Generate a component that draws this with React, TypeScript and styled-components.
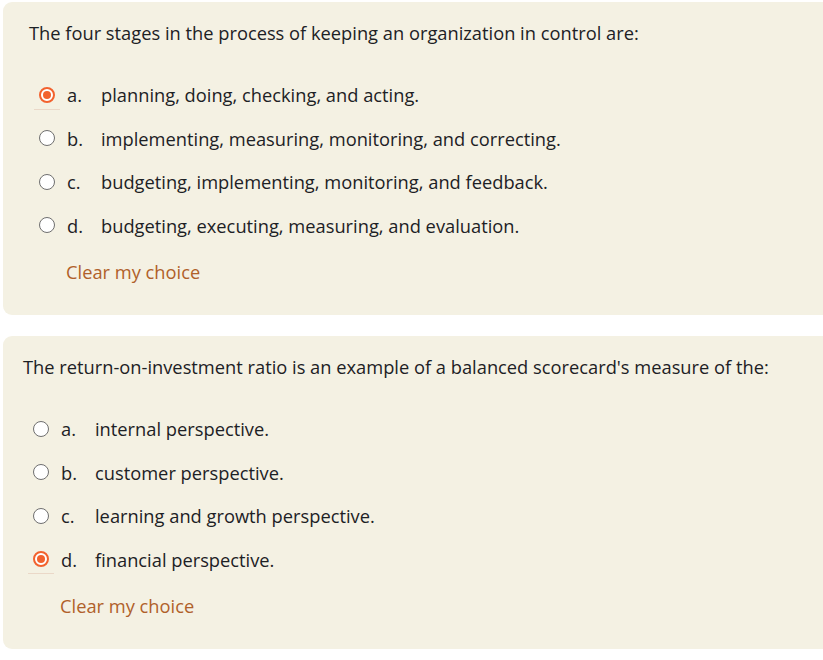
import React, { useState } from "react";
import styled, { createGlobalStyle } from "styled-components";

const GlobalStyle = createGlobalStyle`
  html, body {
    margin: 0;
    padding: 0;
    background: #ffffff;
    overflow-x: hidden;
  }
  body {
    font-family: "Open Sans", "Noto Sans", sans-serif;
    color: #1d2125;
  }
`;

const Page = styled.div`
  display: flex;
  flex-direction: column;
  gap: 21px;
  padding: 2px 0 0 3px;
  width: 850px;
`;

const Card = styled.section<{ $indent: number }>`
  background: #f4f1e3;
  border-radius: 9px;
  padding: 17px 0 29px ${(p) => p.$indent}px;
`;

const Question = styled.div`
  font-size: 18.3px;
  line-height: 28px;
`;

const Options = styled.div`
  display: flex;
  flex-direction: column;
  margin-top: 26px;
  padding-left: 10px;
`;

const Row = styled.label`
  display: flex;
  align-items: center;
  height: 43.5px;
  font-size: 18.3px;
  cursor: pointer;
`;

const RadioWrap = styled.span<{ $checked: boolean }>`
  position: relative;
  width: 16px;
  height: 16px;
  flex: none;
  &::after {
    content: "";
    display: ${(p) => (p.$checked ? "block" : "none")};
    position: absolute;
    left: -5px;
    top: 22px;
    width: 26px;
    height: 1px;
    background: #ead8c8;
  }
`;

const RadioCircle = styled.span<{ $checked: boolean }>`
  box-sizing: border-box;
  display: block;
  width: 16px;
  height: 16px;
  border-radius: 50%;
  background: #ffffff;
  border: ${(p) => (p.$checked ? "2px solid #f2622e" : "1.5px solid #6f6f6f")};
  position: relative;
  &::after {
    content: "";
    display: ${(p) => (p.$checked ? "block" : "none")};
    position: absolute;
    left: 2px;
    top: 2px;
    width: 8px;
    height: 8px;
    border-radius: 50%;
    background: #f2622e;
  }
`;

const Letter = styled.span`
  width: 34px;
  margin-left: 12px;
  flex: none;
`;

const AnswerText = styled.span``;

const ClearLink = styled.a`
  display: inline-block;
  margin-top: 11px;
  margin-left: 37px;
  font-size: 18.3px;
  line-height: 28px;
  color: #b0602a;
  text-decoration: none;
  cursor: pointer;
`;

type Q = {
  id: string;
  text: string;
  options: string[];
  selected: number;
  indent: number;
};

const questions: Q[] = [
  {
    id: "q1",
    text: "The four stages in the process of keeping an organization in control are:",
    options: [
      "planning, doing, checking, and acting.",
      "implementing, measuring, monitoring, and correcting.",
      "budgeting, implementing, monitoring, and feedback.",
      "budgeting, executing, measuring, and evaluation.",
    ],
    selected: 0,
    indent: 26,
  },
  {
    id: "q2",
    text: "The return-on-investment ratio is an example of a balanced scorecard's measure of the:",
    options: [
      "internal perspective.",
      "customer perspective.",
      "learning and growth perspective.",
      "financial perspective.",
    ],
    selected: 3,
    indent: 20,
  },
];

const letters = ["a.", "b.", "c.", "d."];

function QuestionCard({ q }: { q: Q }) {
  const [sel, setSel] = useState<number>(q.selected);
  return (
    <Card $indent={q.indent}>
      <Question>{q.text}</Question>
      <Options>
        {q.options.map((o, i) => (
          <Row key={i} onClick={() => setSel(i)}>
            <RadioWrap $checked={sel === i}>
              <RadioCircle $checked={sel === i} />
            </RadioWrap>
            <Letter>{letters[i]}</Letter>
            <AnswerText>{o}</AnswerText>
          </Row>
        ))}
      </Options>
      <ClearLink onClick={() => setSel(-1)}>Clear my choice</ClearLink>
    </Card>
  );
}

export default function App() {
  return (
    <>
      <GlobalStyle />
      <Page>
        {questions.map((q) => (
          <QuestionCard key={q.id} q={q} />
        ))}
      </Page>
    </>
  );
}
